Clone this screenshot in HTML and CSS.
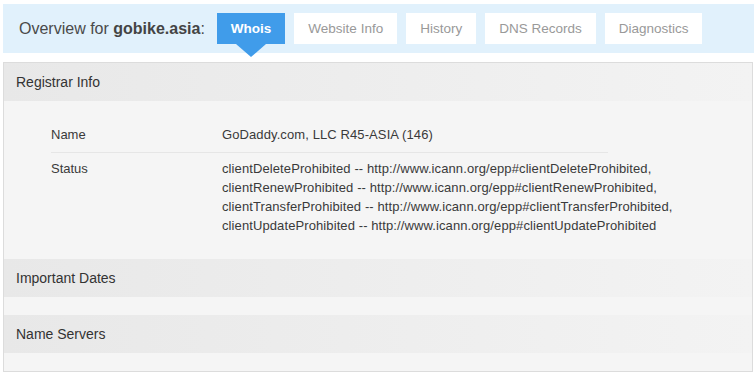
FILE: index.html
```html
<!DOCTYPE html>
<html lang="en">
<head>
  <meta charset="UTF-8" />
  <meta name="viewport" content="width=device-width, initial-scale=1" />
  <title>Overview for gobike.asia</title>
  <link rel="stylesheet" href="styles.css">
</head>
<body>

  <div class="overview">
    <h1 class="overview-title">Overview for <strong>gobike.asia</strong>:</h1>
    <nav class="tabs">
      <a class="tab active" href="#">Whois</a>
      <a class="tab" href="#">Website Info</a>
      <a class="tab" href="#">History</a>
      <a class="tab" href="#">DNS Records</a>
      <a class="tab" href="#">Diagnostics</a>
    </nav>
  </div>

  <div class="panel">
    <section class="block">
      <h2 class="block-head">Registrar Info</h2>
      <div class="block-body">
        <table class="info">
          <tr>
            <td class="info-label">Name</td>
            <td>GoDaddy.com, LLC R45-ASIA (146)</td>
          </tr>
          <tr>
            <td class="info-label">Status</td>
            <td>
              clientDeleteProhibited -- http://www.icann.org/epp#clientDeleteProhibited,<br>
              clientRenewProhibited -- http://www.icann.org/epp#clientRenewProhibited,<br>
              clientTransferProhibited -- http://www.icann.org/epp#clientTransferProhibited,<br>
              clientUpdateProhibited -- http://www.icann.org/epp#clientUpdateProhibited
            </td>
          </tr>
        </table>
      </div>
    </section>

    <section class="block">
      <h2 class="block-head">Important Dates</h2>
      <div class="block-body empty"></div>
    </section>

    <section class="block">
      <h2 class="block-head">Name Servers</h2>
      <div class="block-body empty"></div>
    </section>
  </div>

</body>
</html>
```

FILE: styles.css
```css
* {
  box-sizing: border-box;
}

body {
  margin: 4px 0 0 3px;
  font-family: 'Liberation Sans', Arial, sans-serif;
  color: #333;
  background: #fff;
}

.overview {
  display: flex;
  align-items: center;
  gap: 12px;
  height: 49px;
  padding-left: 16px;
  background: #e1f1fc;
}

.overview-title {
  margin: 0;
  font-size: 16px;
  font-weight: normal;
  color: #4a4a4a;
}

.overview-title strong {
  color: #444;
}

.tabs {
  display: flex;
  gap: 9px;
}

.tab {
  position: relative;
  display: block;
  height: 31px;
  line-height: 31px;
  padding: 0 14px;
  font-size: 13.5px;
  color: #999;
  background: #fff;
  text-decoration: none;
}

.tab.active {
  background: #409cea;
  color: #fff;
  font-weight: bold;
}

.tab.active::after {
  content: "";
  position: absolute;
  left: 50%;
  top: 31px;
  margin-left: -15px;
  border-left: 15px solid transparent;
  border-right: 15px solid transparent;
  border-top: 13px solid #409cea;
}

.panel {
  margin: 9px 1px 0 0;
  border: 1px solid #dcdcdc;
  background: #f5f5f5;
}

.block-head {
  margin: 0;
  height: 38px;
  line-height: 38px;
  padding-left: 12px;
  font-size: 14px;
  font-weight: normal;
  color: #333;
  background: linear-gradient(to right, #e8e8e8, #f3f3f3);
}

.block-body {
  padding: 16px 0 18px 47px;
}

.block-body.empty {
  padding: 0;
  height: 18px;
}

.info {
  border-collapse: collapse;
  table-layout: fixed;
  width: 557px;
  font-size: 13px;
  line-height: 19px;
  color: #3a3a3a;
}

.info td {
  padding: 6px 0;
  vertical-align: top;
  white-space: nowrap;
}

.info td + td {
  letter-spacing: 0.1px;
}

.info tr:first-child td {
  padding: 8px 0;
  border-bottom: 1px solid #e6e6e6;
}

.info-label {
  width: 171px;
}
```
